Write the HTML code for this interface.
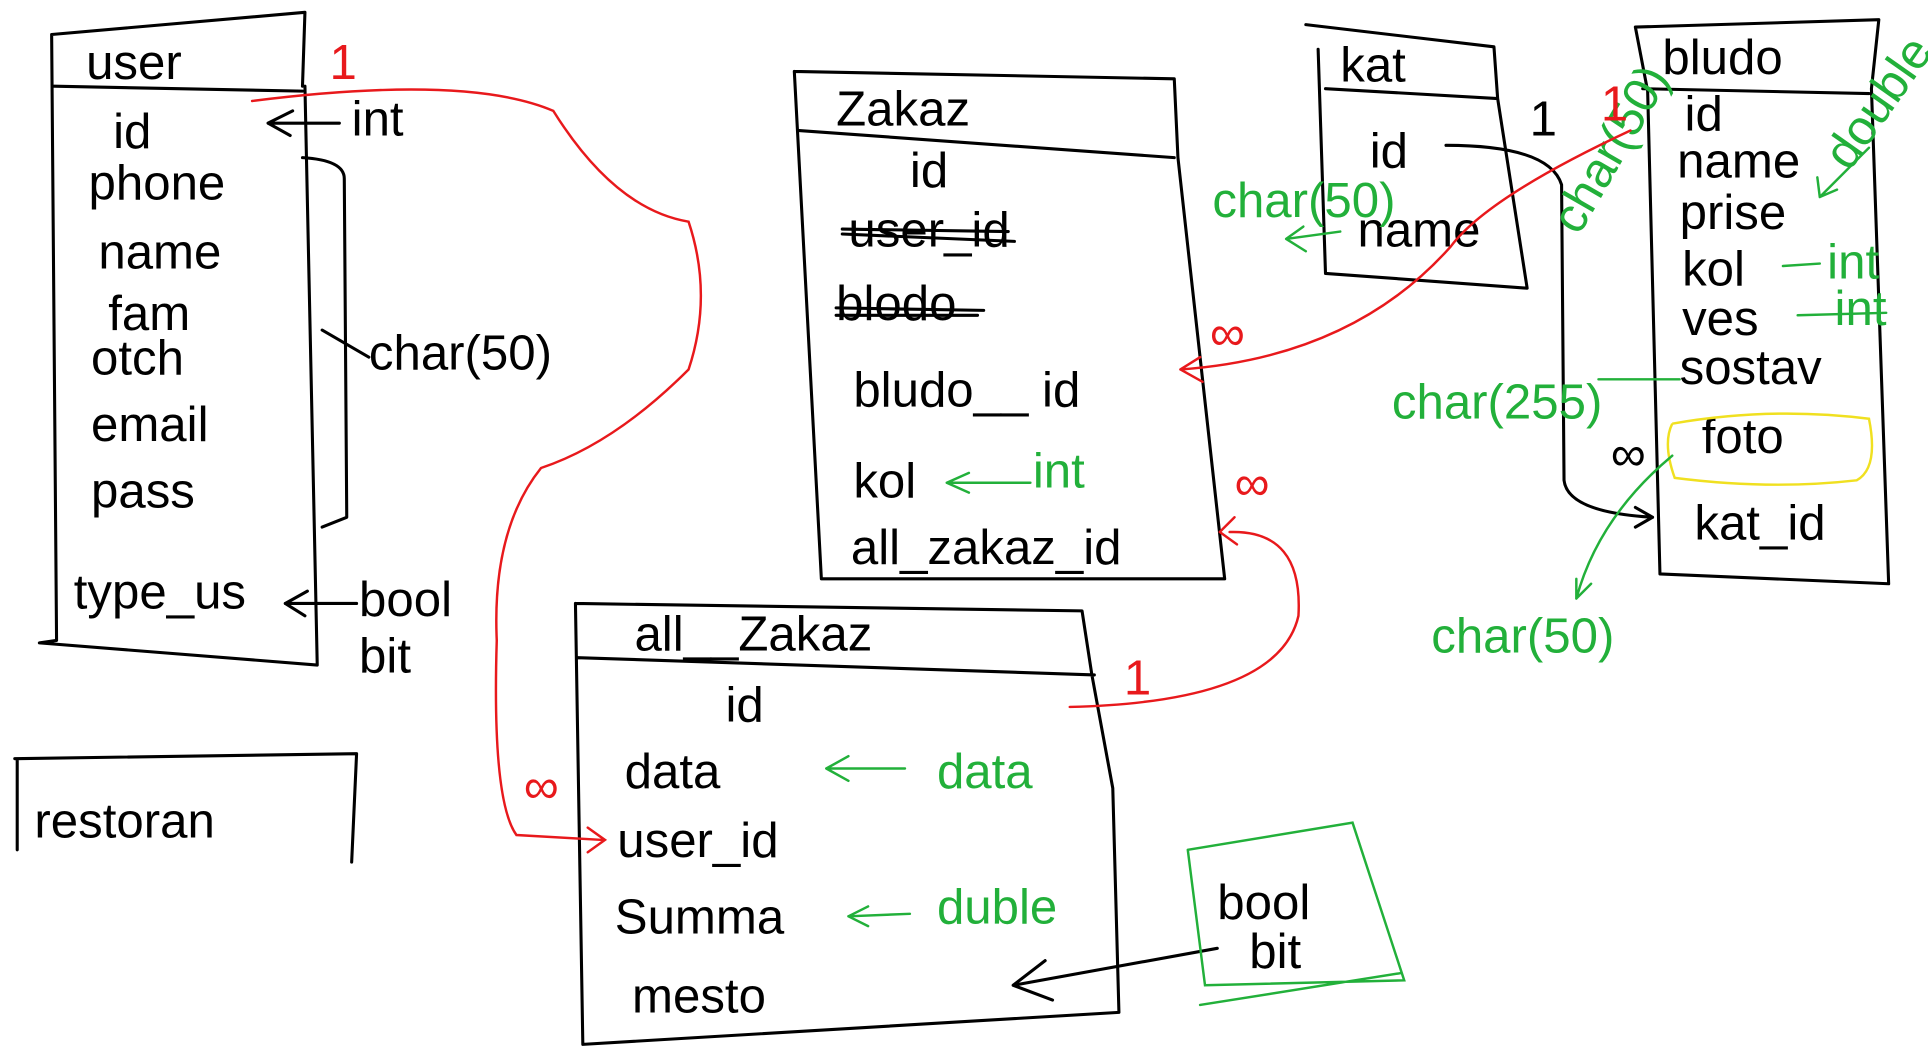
<!DOCTYPE html>
<html><head><meta charset="utf-8">
<style>
html,body{margin:0;padding:0;background:#fff;width:1928px;height:1053px;overflow:hidden}
svg{display:block}
text{font-family:"Liberation Sans",sans-serif}
.k{fill:none;stroke:#000;stroke-width:2.5;stroke-linecap:round;stroke-linejoin:round}
.r{fill:none;stroke:#e8191c;stroke-width:2;stroke-linecap:round}
.g{fill:none;stroke:#22b03a;stroke-width:2;stroke-linecap:round}
.y{fill:none;stroke:#f0e020;stroke-width:2}
.t{fill:#000;font-size:40px}
.tg{fill:#22b03a}
.tr{fill:#e8191c}
</style></head><body>
<svg width="1928" height="1053" viewBox="0 0 1568 855" preserveAspectRatio="none">
<path class="k" d="M42 28 L248 10 L246 70 M42 28 L46 520 L32 522 L258 540 L248 70 M44 70 L246 74"/>
<text x="70" y="64" class="t" font-size="44">user</text>
<text x="92" y="120" class="t">id</text>
<text x="72" y="162" class="t">phone</text>
<text x="80" y="218" class="t">name</text>
<text x="88" y="268" class="t">fam</text>
<text x="74" y="304" class="t" font-size="32">otch</text>
<text x="74" y="358" class="t">email</text>
<text x="74" y="412" class="t">pass</text>
<text x="60" y="494" class="t">type_us</text>
<path class="k" d="M246 128 Q280 130 280 145 L282 420 L262 428 M262 268 L300 290 M218 100 L238 90 M218 100 L236 110 M218 100 L276 100"/>
<text x="286" y="110" class="t" font-size="28">int</text>
<text x="300" y="300" class="t">char(50)</text>
<path class="k" d="M232 490 L290 490 M232 490 L250 480 M232 490 L248 500"/>
<text x="292" y="500" class="t" font-size="36">bool</text>
<text x="292" y="546" class="t" font-size="36">bit</text>
<path class="k" d="M12 616 L290 612 L286 700 M14 616 L14 690"/>
<text x="28" y="680" class="t" font-size="44">restoran</text>
<path class="k" d="M646 58 L955 64 L958 128 L996 470 L668 470 L646 58 M650 106 L955 128"/>
<text x="680" y="102" class="t" font-size="46">Zakaz</text>
<text x="740" y="152" class="t">id</text>
<text x="690" y="200" class="t" font-size="32">user_id</text>
<path class="k" d="M685 190 L825 196 M685 186 L820 188"/>
<text x="680" y="260" class="t" font-size="32">blodo</text>
<path class="k" d="M680 250 L800 252 M680 256 L795 256"/>
<text x="694" y="330" class="t">bludo__ id</text>
<text x="694" y="404" class="t">kol</text>
<text x="692" y="458" class="t" font-size="34">all_zakaz_id</text>
<path class="g" d="M770 392 L838 392 M770 392 L788 384 M770 392 L788 400"/>
<text x="840" y="396" class="t tg" font-size="34">int</text>
<path class="k" d="M468 490 L880 496 L888 548 L905 640 L910 822 L474 848 L468 490 M470 534 L890 548"/>
<text x="516" y="528" class="t" font-size="40">all__Zakaz</text>
<text x="590" y="586" class="t">id</text>
<text x="508" y="640" class="t">data</text>
<text x="502" y="696" class="t">user_id</text>
<text x="500" y="758" class="t">Summa</text>
<text x="514" y="822" class="t">mesto</text>
<path class="g" d="M672 624 L736 624 M672 624 L690 614 M672 624 L690 634 M690 744 L740 742 M690 744 L706 736 M690 744 L706 752"/>
<text x="762" y="640" class="t tg">data</text>
<text x="762" y="750" class="t tg" font-size="34">duble</text>
<path class="k" d="M824 800 L990 770 M824 800 L850 780 M824 800 L856 812"/>
<path class="g" d="M966 690 L1100 668 L1142 796 L980 800 L966 690 M976 816 L1140 790"/>
<text x="990" y="746" class="t" font-size="38">bool</text>
<text x="1016" y="786" class="t" font-size="34">bit</text>
<path class="k" d="M1062 20 L1215 38 L1218 80 L1242 234 L1078 222 L1072 40 M1078 72 L1218 80"/>
<text x="1090" y="66" class="t" font-size="44">kat</text>
<text x="1114" y="136" class="t">id</text>
<text x="1104" y="200" class="t">name</text>
<path class="k" d="M1176 118 Q1260 118 1270 150 L1272 390 Q1275 416 1344 420 M1330 412 L1344 420 L1330 428"/>
<text x="1244" y="110" class="t" font-size="30">1</text>
<text x="986" y="176" class="t tg" font-size="30">char(50)</text>
<path class="g" d="M1046 194 L1090 188 M1046 194 L1060 184 M1046 194 L1062 204"/>
<path class="k" d="M1330 22 L1528 16 L1522 72 L1536 474 L1350 466 L1340 74 L1330 22 M1336 72 L1520 76"/>
<text x="1352" y="60" class="t" font-size="34">bludo</text>
<text x="1370" y="106" class="t" font-size="28">id</text>
<text x="1364" y="144" class="t" font-size="30">name</text>
<text x="1366" y="186" class="t">prise</text>
<text x="1368" y="232" class="t">kol</text>
<text x="1368" y="272" class="t">ves</text>
<text x="1366" y="312" class="t">sostav</text>
<text x="1384" y="368" class="t">foto</text>
<text x="1378" y="438" class="t">kat_id</text>
<text x="1310" y="382" class="t" font-size="22">∞</text>
<path class="y" d="M1360 344 Q1440 330 1520 340 Q1528 380 1510 390 Q1440 398 1362 388 Q1352 360 1360 344"/>
<path class="g" d="M1300 308 L1366 308 M1450 216 L1480 214 M1462 256 L1534 254 M1480 160 L1520 120 M1480 160 L1478 144 M1480 160 L1494 154 M1360 370 Q1300 420 1282 486 M1282 486 L1282 470 M1282 486 L1294 474"/>
<text x="1486" y="226" class="t tg" font-size="26">int</text>
<text x="1492" y="264" class="t tg" font-size="26">int</text>
<text x="1504" y="140" class="t tg" font-size="22" transform="rotate(-55 1504 140)">double</text>
<text x="1284" y="192" class="t tg" font-size="22" transform="rotate(-60 1284 192)">char(50)</text>
<text x="1132" y="340" class="t tg" font-size="36">char(255)</text>
<text x="1164" y="530" class="t tg" font-size="42">char(50)</text>
<path class="r" d="M205 82 Q380 60 450 90 Q500 170 560 180 Q580 240 560 300 Q500 360 440 380 Q400 430 404 520 Q400 650 420 678 L490 682 M478 672 L492 682 L478 692"/>
<text x="268" y="64" class="t tr" font-size="30">1</text>
<text x="426" y="652" class="t tr" font-size="26">∞</text>
<path class="r" d="M1326 106 Q1210 160 1180 200 Q1100 290 960 300 M960 300 L976 290 M960 300 L978 310"/>
<text x="1302" y="98" class="t tr" font-size="30">1</text>
<text x="984" y="284" class="t tr" font-size="40">∞</text>
<path class="r" d="M870 574 Q1040 570 1056 500 Q1060 430 1000 432 M992 432 L1004 420 M992 432 L1006 442"/>
<text x="914" y="564" class="t tr" font-size="30">1</text>
<text x="1004" y="406" class="t tr" font-size="40">∞</text>
</svg>
</body></html>
